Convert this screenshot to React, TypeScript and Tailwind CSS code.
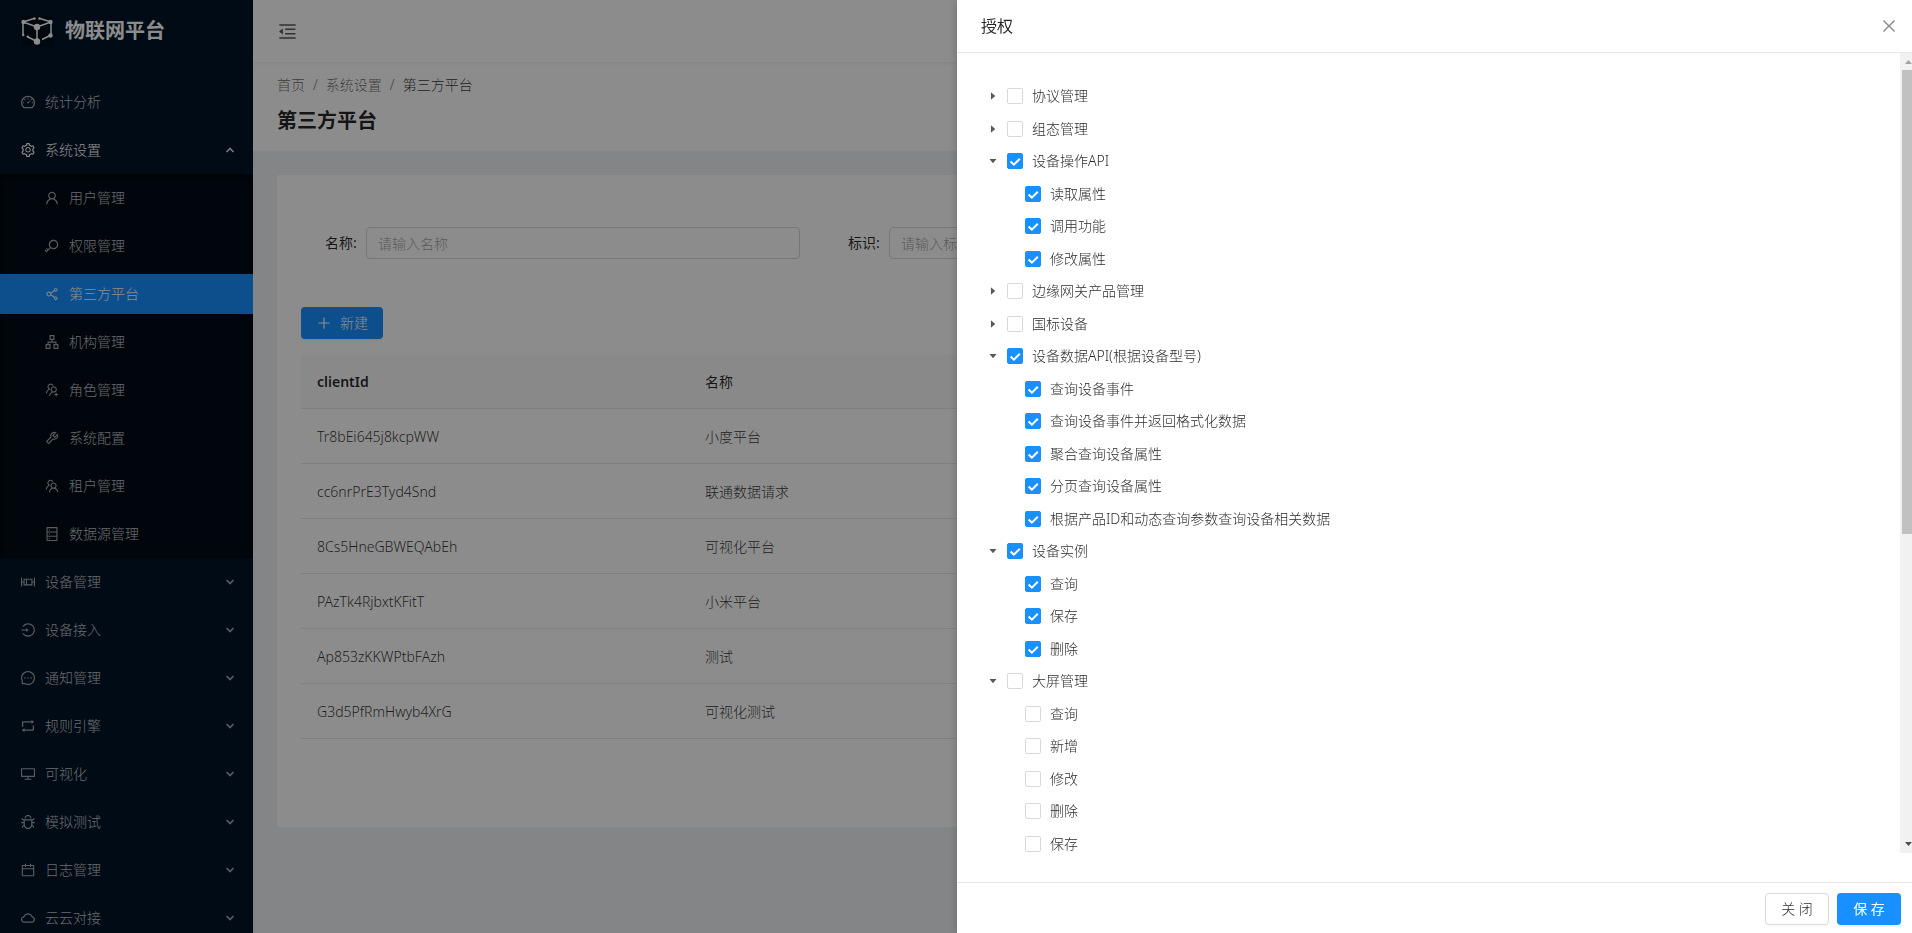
import type { ReactNode } from "react";
import type { IconType } from "react-icons";
import {
  AiFillCaretDown,
  AiFillCaretRight,
  AiOutlineApartment,
  AiOutlineBoxPlot,
  AiOutlineBug,
  AiOutlineCalendar,
  AiOutlineClose,
  AiOutlineCloud,
  AiOutlineDashboard,
  AiOutlineDatabase,
  AiOutlineDesktop,
  AiOutlineKey,
  AiOutlineLogin,
  AiOutlineMenuFold,
  AiOutlineMessage,
  AiOutlinePlus,
  AiOutlineRetweet,
  AiOutlineSetting,
  AiOutlineShareAlt,
  AiOutlineTeam,
  AiOutlineTool,
  AiOutlineUser,
  AiOutlineUsergroupAdd,
} from "react-icons/ai";

type MenuEntry = { label: string; icon: IconType; active?: boolean };

const settingsMenu: MenuEntry[] = [
  { label: "用户管理", icon: AiOutlineUser },
  { label: "权限管理", icon: AiOutlineKey },
  { label: "第三方平台", icon: AiOutlineShareAlt, active: true },
  { label: "机构管理", icon: AiOutlineApartment },
  { label: "角色管理", icon: AiOutlineUsergroupAdd },
  { label: "系统配置", icon: AiOutlineTool },
  { label: "租户管理", icon: AiOutlineTeam },
  { label: "数据源管理", icon: AiOutlineDatabase },
];

const closedMenus: MenuEntry[] = [
  { label: "设备管理", icon: AiOutlineBoxPlot },
  { label: "设备接入", icon: AiOutlineLogin },
  { label: "通知管理", icon: AiOutlineMessage },
  { label: "规则引擎", icon: AiOutlineRetweet },
  { label: "可视化", icon: AiOutlineDesktop },
  { label: "模拟测试", icon: AiOutlineBug },
  { label: "日志管理", icon: AiOutlineCalendar },
  { label: "云云对接", icon: AiOutlineCloud },
];

const clients = [
  ["Tr8bEi645j8kcpWW", "小度平台"],
  ["cc6nrPrE3Tyd4Snd", "联通数据请求"],
  ["8Cs5HneGBWEQAbEh", "可视化平台"],
  ["PAzTk4RjbxtKFitT", "小米平台"],
  ["Ap853zKKWPtbFAzh", "测试"],
  ["G3d5PfRmHwyb4XrG", "可视化测试"],
];

type Permission = { label: string; checked?: boolean; children?: string[] };

const permissions: Permission[] = [
  { label: "协议管理" },
  { label: "组态管理" },
  { label: "设备操作API", checked: true, children: ["读取属性", "调用功能", "修改属性"] },
  { label: "边缘网关产品管理" },
  { label: "国标设备" },
  {
    label: "设备数据API(根据设备型号)",
    checked: true,
    children: [
      "查询设备事件",
      "查询设备事件并返回格式化数据",
      "聚合查询设备属性",
      "分页查询设备属性",
      "根据产品ID和动态查询参数查询设备相关数据",
    ],
  },
  { label: "设备实例", checked: true, children: ["查询", "保存", "删除"] },
  { label: "大屏管理", children: ["查询", "新增", "修改", "删除", "保存"] },
];

function Logo() {
  return (
    <svg viewBox="0 0 32 32" className="size-8 shrink-0" fill="none" stroke="#fff" strokeWidth="1.5">
      <rect width="32" height="32" fill="#00101c" stroke="none" />
      <path d="M2 7 13 3.500M19 3.500 30 7M2 7 16 12 30 7M2 7V20M30 7V20M16 12V26M7 22 16 26.500M21 24.500 29 20.500" />
      <g fill="#fff" stroke="none">
        <circle cx="16" cy="12" r="3.200" />
        <circle cx="16" cy="26.500" r="3.200" />
        <circle cx="2.500" cy="7" r="2.200" />
        <circle cx="29.500" cy="7" r="2.200" />
        <circle cx="29.500" cy="20.500" r="2.200" />
        <circle cx="2.200" cy="20" r="1.200" />
        <circle cx="6.800" cy="21.800" r="1.200" />
        <circle cx="13.500" cy="3.500" r="1.200" />
        <circle cx="18.500" cy="3.500" r="1.200" />
      </g>
    </svg>
  );
}

function Chevron({ up = false }: { up?: boolean }) {
  return (
    <svg
      viewBox="0 0 10 10"
      className="ml-auto size-[10px] opacity-85"
      fill="none"
      stroke="currentColor"
      strokeWidth="1.7"
      aria-hidden="true"
    >
      <path d={up ? "M1.500 7 5 3.500 8.500 7" : "M1.500 3 5 6.500 8.500 3"} />
    </svg>
  );
}

function Sidebar() {
  return (
    <aside className="flex w-[253px] shrink-0 flex-col overflow-hidden bg-[#001529] font-light text-white/75">
      <a href="#home" className="flex h-[62px] shrink-0 items-center gap-3 pl-[21px] text-white">
        <Logo />
        <span className="text-xl font-bold">物联网平台</span>
      </a>
      <nav className="mt-4 flex flex-col">
        <a href="#stats" className="my-1 flex h-10 shrink-0 items-center gap-2 pl-5">
          <AiOutlineDashboard className="size-4 opacity-85" />
          <span className="pl-px">统计分析</span>
        </a>
        <button type="button" className="my-1 flex h-10 shrink-0 items-center gap-2 pr-[18px] pl-5 text-white">
          <AiOutlineSetting className="size-4" />
          <span className="pl-px">系统设置</span>
          <Chevron up />
        </button>
        <div className="flex shrink-0 flex-col bg-[#000c17] shadow-[inset_0_2px_8px_rgba(0,0,0,0.45)]">
          {settingsMenu.map(({ label, icon: Icon, active }) => (
            <a
              key={label}
              href="#settings"
              className={
                active
                  ? "my-1 flex h-10 items-center gap-2 bg-[#1890ff] pl-11 text-white"
                  : "my-1 flex h-10 items-center gap-2 pl-11"
              }
            >
              <Icon className="size-4 opacity-85" />
              <span className="pl-px">{label}</span>
            </a>
          ))}
        </div>
        {closedMenus.map(({ label, icon: Icon }) => (
          <button
            key={label}
            type="button"
            className="my-1 flex h-10 shrink-0 items-center gap-2 pr-[18px] pl-5"
          >
            <Icon className="size-4 opacity-85" />
            <span className="pl-px">{label}</span>
            <Chevron />
          </button>
        ))}
      </nav>
    </aside>
  );
}

function Field({ id, label }: { id: string; label: string }) {
  return (
    <div className="flex items-center gap-2 text-black/85">
      <label htmlFor={id} className="w-[33px] shrink-0 whitespace-nowrap">
        {label}:
      </label>
      <input
        id={id}
        type="text"
        placeholder={`请输入${label}`}
        className="h-8 w-full min-w-0 rounded-[4px] border border-[#d9d9d9] bg-white px-[11px] font-light placeholder:text-[#a6a6a6]"
      />
    </div>
  );
}

function MainPage() {
  return (
    <div className="flex min-w-0 flex-1 flex-col bg-[#f0f2f5]">
      <header className="z-10 flex h-[62px] shrink-0 items-center bg-white px-6 shadow-[0_1px_4px_rgba(0,21,41,0.08)]">
        <button type="button" aria-label="收起菜单" className="text-black/65">
          <AiOutlineMenuFold className="size-[21px]" />
        </button>
      </header>
      <div className="flex h-[89px] shrink-0 flex-col bg-white px-6 pt-3">
        <nav className="flex gap-2 leading-[22px] font-light text-black/60">
          <a href="#home">首页</a>
          <span>/</span>
          <a href="#settings">系统设置</a>
          <span>/</span>
          <span className="text-black/80">第三方平台</span>
        </nav>
        <h1 className="mt-[9px] text-xl leading-8 font-semibold text-black/85">第三方平台</h1>
      </div>
      <main className="m-6 rounded-[2px] bg-white px-6 pb-[88px]">
        <form className="grid grid-cols-3 gap-12 pt-[52px] pr-[18px] pl-6">
          <Field id="name" label="名称" />
          <Field id="code" label="标识" />
        </form>
        <button
          type="button"
          className="mt-12 mb-4 flex h-8 items-center gap-2 rounded-[4px] bg-[#1890ff] px-[15px] font-light text-white shadow-[0_2px_0_rgba(0,0,0,0.045)]"
        >
          <AiOutlinePlus className="size-4" />
          新建
        </button>
        <table className="w-full table-fixed border-collapse text-left">
          <thead className="bg-[#fafafa] text-black/85">
            <tr className="h-[53px] border-b border-[#e8e8e8]">
              <th className="w-[388px] px-4 pt-[2px] font-semibold">clientId</th>
              <th className="px-4 pt-[2px] font-normal">名称</th>
            </tr>
          </thead>
          <tbody className="font-light text-black/80">
            {clients.map(([clientId, name]) => (
              <tr key={clientId} className="h-[55px] border-b border-[#e8e8e8]">
                <td className="px-4 pt-[2px]">{clientId}</td>
                <td className="px-4 pt-[2px]">{name}</td>
              </tr>
            ))}
          </tbody>
        </table>
      </main>
    </div>
  );
}

function Checkbox({ id, checked }: { id: string; checked: boolean }) {
  return (
    <span className="grid size-4 shrink-0">
      <input
        id={id}
        type="checkbox"
        defaultChecked={checked}
        className="peer col-start-1 row-start-1 size-4 appearance-none rounded-[2px] border border-[#d9d9d9] bg-white checked:border-[#1890ff] checked:bg-[#1890ff]"
      />
      <svg
        viewBox="0 0 16 16"
        className="pointer-events-none invisible col-start-1 row-start-1 size-4 peer-checked:visible"
        fill="none"
        stroke="#fff"
        strokeWidth="2"
        aria-hidden="true"
      >
        <path d="M3.600 8.500 6.900 11.700 12.800 5.700" />
      </svg>
    </span>
  );
}

function TreeRow({ id, checked, children, label }: { id: string; checked: boolean; label: string; children?: ReactNode }) {
  return (
    <li className="flex items-center">
      {children}
      <Checkbox id={id} checked={checked} />
      <label htmlFor={id} className="pl-[9px] whitespace-nowrap">
        {label}
      </label>
    </li>
  );
}

function PermissionTree() {
  return (
    <ul className="grid h-[780px] auto-rows-fr pl-6 font-light text-black/85">
      {permissions.flatMap(({ label, checked = false, children }, index) => [
        <TreeRow key={label} id={`p-${index}`} checked={checked} label={label}>
          <button
            type="button"
            aria-label={label}
            className="mr-[2px] flex size-6 items-center justify-center text-[10px] text-black/65"
          >
            {children ? <AiFillCaretDown /> : <AiFillCaretRight />}
          </button>
        </TreeRow>,
        ...(children ?? []).map((child, childIndex) => (
          <TreeRow key={`${label}-${child}`} id={`p-${index}-${childIndex}`} checked={checked} label={child}>
            <span className="w-11 shrink-0" />
          </TreeRow>
        )),
      ])}
    </ul>
  );
}

function ScrollTrack() {
  return (
    <div className="flex w-3 shrink-0 flex-col overflow-hidden bg-[#f1f1f1]" aria-hidden="true">
      <svg viewBox="0 0 17 17" className="size-[17px] shrink-0">
        <path d="M5 11h7L8.500 7z" fill="#a3a3a3" />
      </svg>
      <div className="ml-[2px] h-[464px] bg-[#c1c1c1]" />
      <svg viewBox="0 0 17 17" className="mt-auto size-[17px] shrink-0">
        <path d="M5 6h7L8.500 10z" fill="#505050" />
      </svg>
    </div>
  );
}

function AuthorizeDrawer() {
  return (
    <section
      role="dialog"
      aria-label="授权"
      className="fixed inset-y-0 right-0 z-30 flex w-[calc(50%-1px)] flex-col bg-white shadow-[-2px_0_8px_rgba(0,0,0,0.15)]"
    >
      <header className="flex h-[53px] shrink-0 items-center justify-between border-b border-[#e8e8e8] pr-[14px] pl-6">
        <h2 className="text-base text-black/85">授权</h2>
        <button type="button" aria-label="取消" className="text-black/45">
          <AiOutlineClose className="size-[18px]" />
        </button>
      </header>
      <div className="mb-[29px] flex min-h-0 flex-1">
        <div className="min-w-0 flex-1 overflow-hidden pt-[27px]">
          <PermissionTree />
        </div>
        <ScrollTrack />
      </div>
      <footer className="flex shrink-0 justify-end gap-2 border-t border-[#e8e8e8] pt-[10px] pr-[11px] pb-2">
        <button
          type="button"
          className="h-8 w-16 rounded-[4px] border border-[#d9d9d9] bg-white font-light text-black/85 shadow-[0_2px_0_rgba(0,0,0,0.015)]"
        >
          关 闭
        </button>
        <button
          type="button"
          className="h-8 w-16 rounded-[4px] bg-[#1890ff] text-white shadow-[0_2px_0_rgba(0,0,0,0.045)]"
        >
          保 存
        </button>
      </footer>
    </section>
  );
}

export default function App() {
  return (
    <div className="flex h-screen overflow-hidden font-['Noto_Sans','Noto_Sans_CJK_SC',sans-serif] text-sm">
      <Sidebar />
      <MainPage />
      <div className="fixed inset-0 z-20 bg-black/45" />
      <AuthorizeDrawer />
    </div>
  );
}
